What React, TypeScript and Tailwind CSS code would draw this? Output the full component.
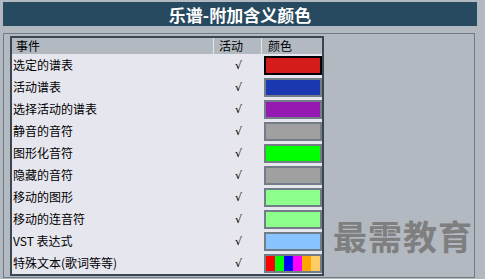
import React from 'react';

const rows: { label: string; color: string | string[]; selected?: boolean }[] = [
  { label: '选定的谱表', color: '#d41c1c', selected: true },
  { label: '活动谱表', color: '#1a38b0' },
  { label: '选择活动的谱表', color: '#941ab2' },
  { label: '静音的音符', color: '#a0a0a0' },
  { label: '图形化音符', color: '#00ff00' },
  { label: '隐藏的音符', color: '#a0a0a0' },
  { label: '移动的图形', color: '#8cff8c' },
  { label: '移动的连音符', color: '#8cff8c' },
  { label: 'VST 表达式', color: '#88c4ff' },
  {
    label: '特殊文本(歌词等等)',
    color: ['#ff0000', '#00ff00', '#0000ff', '#ff00ff', '#ffa500', '#ffcc66'],
  },
];

const font = { fontFamily: '"Noto Sans CJK SC", "Liberation Sans", sans-serif' };

function Swatch({ color, selected }: { color: string | string[]; selected?: boolean }) {
  const border = selected ? 'border-black' : 'border-[#737d88]';
  if (Array.isArray(color)) {
    return (
      <div className={`flex h-[19px] w-[58px] border-2 ${border} bg-[#fff0d8]`}>
        {color.map((c) => (
          <div key={c} className="h-full w-[9px]" style={{ backgroundColor: c }} />
        ))}
      </div>
    );
  }
  return <div className={`h-[19px] w-[58px] border-2 ${border}`} style={{ backgroundColor: color }} />;
}

export default function App() {
  return (
    <div className="relative h-[279px] w-[485px] overflow-hidden bg-[#b2b9c1]" style={font}>
      <div className="mx-[3px] mt-[2px] flex h-[24px] w-[474px] items-center justify-center bg-[#284a60] text-[17px] font-semibold leading-none text-white">
        乐谱-附加含义颜色
      </div>

      <div className="ml-[3px] mt-[7px] h-[245px] w-[472px] border border-[#6f7a84] pl-[6px] pt-[2px]">
        <div className="w-[314px] border-2 border-[#3a4650] bg-[#e6e6ee] text-[12px] leading-none text-black">
          <div className="flex h-[16px] items-center bg-[#b2b9c1]">
            <div className="flex h-full w-[202px] items-center border-r border-[#e6e6ee] pl-[4px]">事件</div>
            <div className="flex h-full w-[48px] items-center border-r border-[#e6e6ee] pl-[5px]">活动</div>
            <div className="flex h-full flex-1 items-center pl-[6px]">颜色</div>
          </div>
          {rows.map((r) => (
            <div key={r.label} className="flex h-[22px] items-center">
              <div className="w-[202px] pl-[1px]">{r.label}</div>
              <div className="w-[48px] pl-[21px] font-['DejaVu_Sans',sans-serif] text-[11px] text-black">√</div>
              <div className="pl-[2px]">
                <Swatch color={r.color} selected={r.selected} />
              </div>
            </div>
          ))}
        </div>
      </div>

      <div className="absolute left-[333px] top-[219px] text-[34px] font-bold leading-none tracking-[1px] text-[#7f7f7f]">
        最需教育
      </div>
    </div>
  );
}
